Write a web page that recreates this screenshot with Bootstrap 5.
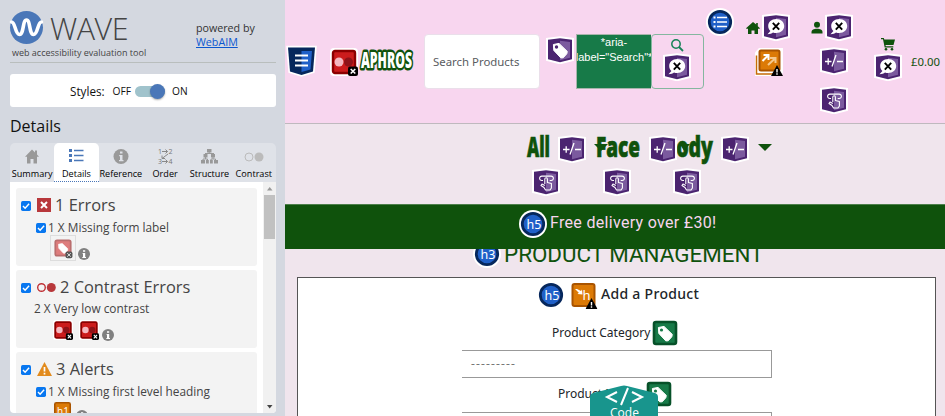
<!DOCTYPE html>
<html lang="en">
<head>
<meta charset="utf-8">
<meta name="viewport" content="width=device-width, initial-scale=1">
<title>WAVE – Aphros product management</title>
<link href="https://cdn.jsdelivr.net/npm/bootstrap@5.3.0/dist/css/bootstrap.min.css" rel="stylesheet">
<style>
html,body{height:416px;overflow:hidden}
body{font-family:"Noto Sans",sans-serif;font-size:12px;line-height:16px;color:#212529}
svg{display:block;flex:none;overflow:visible}
.ic{width:28px;height:28px}
/* sidebar */
.wave{width:285px;height:416px;padding:0 9px 3px 10px;background:#d4d8e0;font-family:"Open Sans",sans-serif;color:#333;overflow:hidden}
.brand-row{height:63px;border-bottom:1px solid #b9bebd}
.brand-top{height:46px;padding-top:10px}
.brand-name{font-weight:300;font-size:30.500px;line-height:36px;margin:0 0 0 7px;color:#444;letter-spacing:-.5px}
.tagline{font-size:9px;line-height:14px;margin-left:2px;white-space:nowrap;color:#444}
.powered{font-size:10.700px;line-height:14px;width:80px;padding-top:21px}
.powered a{color:#0b57d0}
.styles-box{height:33px;margin-top:11px;background:#fff;border-radius:3px;padding:1px 0 0 60px;color:#111}
.styles-lab{font-size:11.700px}
.styles-opt{font-size:10.200px}
.switch-track{width:30px;height:11px;border-radius:6px;background:#a0c3cc;margin:0 7px 0 4px}
.switch-knob{width:15px;height:15px;border-radius:50%;background:#4a77b8;box-shadow:0 1px 2px #0005;margin:-2px 0 0 auto}
.panel-title{font-size:16px;line-height:22px;margin:8px 0 6px 0;color:#111}
.tabs-bar{height:39px;background:#dfe2e8;border-radius:5px 5px 0 0}
.tab-item{width:16.666%;height:39px;font-size:9.100px;line-height:12px;padding-top:5px;color:#000;white-space:nowrap;border-bottom:1px dotted transparent}
.tab-item svg{height:18px;width:24px;margin-bottom:2px}
.tab-on{background:#fff;border-bottom-color:#4a77b8;border-radius:5px 5px 0 0}
.results{height:231px;background:#fff;border-radius:0 0 4px 4px;overflow:hidden}
.result-list{width:253px;padding:6px 6px 0 6px}
.group-box{background:#f3f3f3;border-radius:3px;height:78px;margin-bottom:4px;padding:7px 0 0 5px}
.group-head{height:20px;font-size:16.400px;line-height:20px;color:#444}
.group-sub{height:20px;font-size:11.850px;color:#444;padding-top:3px}
.chk{width:10px;height:10px;margin-top:2px}
.sub-chk{margin-right:2px}
.thumb{width:26px;height:26px;border:1px solid #ddd}
.scroller{width:13px;background:#f1f1f1;height:231px}
.thumb-bar{width:11px;height:44px;background:#c1c1c1}
/* page */
.site{width:660px;height:416px;background:#f0e5ed;overflow:hidden}
.top-head{height:124px;background:#f8d6ef;border-bottom:1px solid #bfb9be}
.search-in{width:116px;height:55px;margin:34px 0 0 10px;border:1px solid #eadfea;border-radius:4px;background:#fff;color:#595c5f;padding:0 8px;font-size:11.400px}
.aria-note{width:75px;height:55px;margin:34px 0 0 2px;background:#177a48;color:#fff;font:11px/15px "Liberation Sans",sans-serif;overflow:hidden;white-space:nowrap;border:1px solid #a8b5ac;border-right:0}
.search-btn{width:53px;height:55px;margin-top:34px;border:1px solid #84b79f;border-radius:4px}
.price-txt{color:#0f520c;font-size:11.400px;margin:54px 0 0 9px}
.cat-row{height:80px;padding-left:241px}
.cat-word{font-family:"Open Sans",sans-serif;font-weight:800;font-size:29px;fill:#0f520c;stroke:#0f520c;stroke-width:.7px}
.promo{height:45px;background:#0f520c;border-top:1px solid #4d7f4b;color:#f8d6ef;font:16px/20px Roboto,sans-serif}
.promo-txt{margin-top:-8px;letter-spacing:.31px}
.head-clip{height:28px;overflow:hidden;color:#0f520c;font:22.400px/28px Roboto,sans-serif}
.form-card{margin:0 9px 0 12px;height:150px;background:#fff;border:1px solid #555}
.add-row{height:32px;padding:2px 0 0 239px;font-size:14px}
.add-txt{font-weight:500;letter-spacing:.3px;margin:-2px 0 0 3px}
.select-box{width:310px;height:28px;margin:3px 0 0 164px;border:1px solid #999;border-left:0;color:#777;padding-left:9px;letter-spacing:1.150px}
.code-tab{position:absolute;left:590px;top:385px;width:70px;height:31px;overflow:hidden}
</style>
<script src="https://cdn.jsdelivr.net/npm/bootstrap@5.3.0/dist/js/bootstrap.bundle.min.js"></script>
</head>
<body class="d-flex m-0">
<svg width="0" height="0" class="position-absolute">
<defs>
<symbol id="hex" viewBox="0 0 28 28"><path d="M2 3.700 14 2.200 26 3.700V23.300L14 26.300 2 23.300Z" fill="#4b2470" stroke="#fff" stroke-width="4"/><path d="M2 3.700 14 2.200 26 3.700V23.300L14 26.300 2 23.300Z" fill="#4b2470"/><path d="M14 4.700 24 6V21.700L14 24.200Z" fill="#7b5a9e"/></symbol>
<symbol id="aria" viewBox="0 0 28 28"><use href="#hex"/><path d="M14.200 6C9.500 6 6.200 9 6.200 13c0 2.200.8 3.800 2.200 5L5.500 21.300C8 21.300 9.800 20.700 11 19.600c1 .4 2 .5 3.200.5 4.700 0 8-3 8-7s-3.300-7.100-8-7.100Z" fill="#fff"/><path d="m10.800 9.800 6.400 6.800m0-6.800-6.400 6.800" stroke="#000" stroke-width="1.900"/></symbol>
<symbol id="expand" viewBox="0 0 28 28"><use href="#hex"/><path d="M5 14.500h6.500M8.200 11.300v6.400M12 19.500l4-11.500M17 14.500h6" fill="none" stroke="#fff" stroke-width="1.300"/></symbol>
<symbol id="tapper" viewBox="0 0 28 28"><use href="#hex"/><path d="M11 12.500H9.800a2.200 2.200 0 1 1 0-4.400h9.400a2.200 2.200 0 1 1 0 4.400h-1.500M12.800 16V11a1.300 1.300 0 0 1 2.600 0v3.500l4 1v4.500l-1.400 2h-4.500L12 19.500l-3-2 1-1.500 2.800 1.500" fill="none" stroke="#fff" stroke-width="1.100" stroke-linejoin="round"/></symbol>
<symbol id="tagp" viewBox="0 0 28 28"><path d="M7.400 8.500 13 7.400l8.300 8-.5 2.400-3.600 4-2.400.1-7-7.500Z" fill="#fff" stroke="#fff" stroke-linejoin="round"/></symbol>
<symbol id="tagx" viewBox="0 0 28 28"><use href="#hex"/><use href="#tagp"/><circle cx="10.500" cy="11" r="1.700" fill="#4b2470"/></symbol>
<symbol id="green" viewBox="0 0 28 28"><rect x="1" y="1" width="26" height="26" rx="3" fill="#fff"/><rect x="3" y="3" width="22" height="22" rx="2" fill="#177a48" stroke="#075129" stroke-width="2.600"/><use href="#tagp"/><circle cx="10.500" cy="11" r="1.600" fill="#177a48"/></symbol>
<symbol id="red" viewBox="0 0 28 28"><rect width="28" height="28" rx="4" fill="#fff"/><rect x="3" y="3" width="22" height="22" rx="2" fill="#cc1c1c" stroke="#8b0000" stroke-width="2.400"/><circle cx="9" cy="14" r="4.500" fill="#f4b9c0"/><circle cx="18.500" cy="14" r="4.500" fill="#8f1318"/><rect x="18" y="18.500" width="10" height="9.500" rx="2" fill="#000"/><path d="m20.700 20.900 4.600 4.700m0-4.700-4.600 4.700" stroke="#fff" stroke-width="1.500"/></symbol>
<symbol id="disc" viewBox="0 0 28 28"><circle cx="14" cy="14" r="14" fill="#fff"/><circle cx="14" cy="14" r="10.700" fill="#2060c8" stroke="#06275c" stroke-width="2.800"/></symbol>
<symbol id="warn" viewBox="0 0 12 11"><path d="M6 0 12 11H0Z" fill="#000"/><path d="M6 4v3.500M6 8.300v1.400" stroke="#fff" stroke-width="1.400"/></symbol>
<symbol id="info" viewBox="0 0 12 12"><circle cx="6" cy="6" r="6" fill="#808080"/><path d="M5 2.200h2.200v1.600H5ZM4.500 4.900h2.700V9h.8v.9H4.300V9H5V5.800h-.5Z" fill="#fff"/></symbol>
<symbol id="chk" viewBox="0 0 9 9"><rect width="9" height="9" rx="1.500" fill="#0877f0"/><path d="m1.800 4.600 1.900 1.900 3.600-4" fill="none" stroke="#fff" stroke-width="1.300"/></symbol>
</defs>
</svg>

<aside class="wave flex-shrink-0">
  <div class="brand-row d-flex justify-content-between">
    <div>
      <div class="brand-top d-flex">
        <svg width="33" height="34" viewBox="0 0 33 34"><circle cx="16.500" cy="17.500" r="16.500" fill="#4a77b8"/><path d="M1.500 12C5.500 12 5 24.500 9.500 24.500S12.500 10 16.500 10 19 24.500 23.500 24.500 27.500 12 31.500 12" fill="none" stroke="#fff" stroke-width="3.600" stroke-linecap="round"/></svg>
        <div class="brand-name">WAVE</div>
      </div>
      <div class="tagline">web accessibility evaluation tool</div>
    </div>
    <div class="powered">powered by<br><a href="#">WebAIM</a></div>
  </div>
  <div class="styles-box d-flex align-items-center"><span class="styles-lab">Styles:</span><span class="styles-opt ms-2">OFF</span><div class="switch-track"><div class="switch-knob"></div></div><span class="styles-opt">ON</span></div>
  <div class="panel-title">Details</div>
  <div class="tabs-bar d-flex">
    <div class="tab-item d-flex flex-column align-items-center"><svg viewBox="0 0 24 18"><path d="M12 1.500 5 8.800h2v6.700h3.500V11h3v4.500H17V8.800h2L17 6.600V2.500h-2v2Z" fill="#999"/></svg>Summary</div>
    <div class="tab-item tab-on d-flex flex-column align-items-center"><svg viewBox="0 0 24 18"><path d="M5 2.500h3M5 7.500h3M5 12.500h3" stroke="#4a77b8" stroke-width="3"/><path d="M10 2.500h9.500M10 7.500h9.500M10 12.500h9.500" stroke="#4a77b8" stroke-width="1.500"/></svg>Details</div>
    <div class="tab-item d-flex flex-column align-items-center"><svg viewBox="0 0 24 18"><circle cx="12" cy="8.500" r="7.500" fill="#999"/><path d="M11 3.500h2.500v2H11ZM10.200 7h3.300v5h1v1.300h-4.500V12H11V8.200h-.8Z" fill="#dfe2e8"/></svg>Reference</div>
    <div class="tab-item d-flex flex-column align-items-center"><svg viewBox="0 0 24 18" font-size="7" font-family="Open Sans" fill="#777"><text x="5" y="6">1</text><text x="15.500" y="6">2</text><text x="5" y="16">3</text><text x="15.500" y="16">4</text><path d="M9 3.500h5.500m-2-2 2 2-2 2M9 13.500h5.500m-2-2 2 2-2 2M15 6 9 10.500m0-3v3h3" stroke="#888" fill="none"/></svg>Order</div>
    <div class="tab-item d-flex flex-column align-items-center"><svg viewBox="0 0 24 18"><path d="M10 1h4.500v3.500H10ZM6.500 6h4v3.500h-4ZM14 6h4v3.500h-4ZM4 12h4v3.500H4ZM9 12h2.800v3.500H9ZM13 12h2.800v3.500H13ZM17 12h4v3.500h-4Z" fill="#999"/><path d="M12.200 3v3M8 5.500h9M8.500 9v2H6v2m2.500-2h2v2M16 9v2h-2v2m2-2h2.500v2" stroke="#999" fill="none"/></svg>Structure</div>
    <div class="tab-item d-flex flex-column align-items-center"><svg viewBox="0 0 24 18"><circle cx="7" cy="9" r="4" fill="none" stroke="#bbb"/><circle cx="17" cy="9" r="4.500" fill="#bbb"/></svg>Contrast</div>
  </div>
  <div class="results d-flex">
    <div class="result-list">
      <div class="group-box">
        <div class="group-head d-flex align-items-center"><svg class="chk"><use href="#chk"/></svg><svg style="margin-left:6px" width="14" height="14" viewBox="0 0 14 14"><rect width="14" height="14" fill="#b8383b"/><path d="m4 4 6 6m0-6-6 6" stroke="#fff" stroke-width="2"/></svg><span class="ms-1">1 Errors</span></div>
        <div class="group-sub d-flex align-items-center" style="padding-left:15px"><svg class="chk sub-chk"><use href="#chk"/></svg>1 X Missing form label</div>
        <div class="d-flex align-items-end" style="margin-left:29px"><div class="thumb"><svg width="24" height="24" viewBox="0 0 28 28"><g opacity=".55"><rect x="5" y="5" width="18" height="18" rx="2" fill="#cc1c1c" stroke="#8b0000" stroke-width="2"/></g><g transform="translate(3 3) scale(.78)"><use href="#tagp"/></g><rect x="17" y="18" width="8" height="8" rx="2" fill="#555"/><path d="m19 20 4 4m0-4-4 4" stroke="#fff"/></svg></div><svg style="margin:0 0 1px 2px" width="12" height="12"><use href="#info"/></svg></div>
      </div>
      <div class="group-box">
        <div class="group-head d-flex align-items-center"><svg class="chk"><use href="#chk"/></svg><svg style="margin-left:6px" width="19" height="14" viewBox="0 0 19 14"><circle cx="4.500" cy="7.500" r="3.800" fill="none" stroke="#c03438" stroke-width="1.400"/><circle cx="14.300" cy="7.500" r="4.500" fill="#b8383b"/></svg><span class="ms-1">2 Contrast Errors</span></div>
        <div class="group-sub" style="padding-left:13px">2 X Very low contrast</div>
        <div class="d-flex align-items-end ms-4 ps-2"><svg width="20" height="20" style="margin:3px 0 5px"><use href="#red"/></svg><svg style="margin:0 0 5px 6px" width="20" height="20"><use href="#red"/></svg><svg style="margin:0 0 4px 3px" width="12" height="12"><use href="#info"/></svg></div>
      </div>
      <div class="group-box">
        <div class="group-head d-flex align-items-center"><svg class="chk"><use href="#chk"/></svg><svg style="margin-left:6px" width="15" height="14" viewBox="0 0 15 14"><path d="M7.500 0 15 14H0Z" fill="#e28b1d"/><path d="M7.500 5v4.500m0 1.200v1.800" stroke="#fff" stroke-width="1.700"/></svg><span class="ms-1">3 Alerts</span></div>
        <div class="group-sub d-flex align-items-center" style="padding-left:15px"><svg class="chk sub-chk"><use href="#chk"/></svg>1 X Missing first level heading</div>
        <div class="d-flex align-items-start" style="margin:3px 0 0 33px"><svg width="17" height="20" viewBox="0 0 17 20"><rect x=".8" y=".8" width="15.400" height="16" rx="1.500" fill="#dc7a06" stroke="#a95400" stroke-width="1.600"/><text x="3" y="12.500" font-size="10" fill="#fff">h1</text></svg><svg style="margin:8px 0 0 5px" width="12" height="12"><use href="#info"/></svg></div>
      </div>
    </div>
    <div class="scroller d-flex flex-column align-items-center"><svg width="11" height="13"><path d="M3 8.500h5.500L5.700 5Z" fill="#999"/></svg><div class="thumb-bar"></div><svg class="mt-auto" width="11" height="13"><path d="M3 5h5.500L5.700 8.500Z" fill="#444"/></svg></div>
  </div>
</aside>

<main class="site flex-shrink-0">
  <header class="top-head d-flex align-items-start">
    <svg width="32" height="34" viewBox="0 0 32 34" style="margin-top:43px"><path d="M3 4.500H30L28 28.500 16.500 32 5 28.500Z" fill="#06275c" stroke="#fff" stroke-width="3.400"/><path d="M3 4.500H30L28 28.500 16.500 32 5 28.500Z" fill="#06275c"/><path d="M16.500 8H27L25.500 26.500 16.500 29Z" fill="#2060c8"/><path d="M10 12.500h13M10 17.500h13M10 22.500h13" stroke="#fff" stroke-width="2"/></svg>
    <svg class="ic" style="margin:48px 0 0 13px"><use href="#red"/></svg>
    <svg width="57" height="26" style="margin:47px 0 0 -1px"><text x="4" y="21" textLength="51" lengthAdjust="spacingAndGlyphs" font-family="Open Sans" font-weight="800" font-size="22" fill="#fff" stroke="#0f520c" stroke-width="5" stroke-linejoin="round" paint-order="stroke">APHROS</text></svg>
    <div class="search-in d-flex align-items-center">Search Products</div>
    <svg class="ic" style="margin:36px 0 0 6px"><use href="#tagx"/></svg>
    <div class="aria-note text-center d-flex flex-column align-items-center"><span>*aria-</span><span>label="Search"*</span></div>
    <div class="search-btn d-flex flex-column align-items-center"><svg width="13" height="13" style="margin-top:4px"><circle cx="5" cy="5" r="4.200" fill="none" stroke="#168257" stroke-width="1.500"/><path d="m8 8 4 4" stroke="#168257" stroke-width="1.800"/></svg><svg class="ic" style="margin:1px 2px 0 0"><use href="#aria"/></svg></div>
    <svg class="ic" style="margin:8px 0 0 2px"><use href="#disc"/><path d="M7.500 9.500h2m-2 4.500h2m-2 4.500h2" stroke="#fff" stroke-width="2"/><path d="M11 9.500h10M11 14h10M11 18.500h10" stroke="#fff" stroke-width="1.500"/></svg>
    <div style="margin:13px 0 0 12px">
      <div class="d-flex"><svg width="14" height="14" style="margin-top:8px"><path d="M7 1 0 7.200l1 .8 1-.6V13h3.500V9.500h3V13H12V7.400l1 .6 1-.8-2.200-2V2h-1.600v1.500Z" fill="#0f520c"/></svg><svg class="ic" style="margin-left:2px"><use href="#aria"/></svg></div>
      <svg width="30" height="30" viewBox="0 0 30 30" style="margin:7px 0 0 9px"><path d="M0 4.500 4 0H28V25L24 28H0Z" fill="#fff"/><path d="M1.500 7.500V26H18" fill="none" stroke="#c66b08" stroke-width="1.500"/><rect x="4.500" y="2.500" width="20" height="20" rx="1.500" fill="#dc7a06" stroke="#a95400" stroke-width="2"/><path d="m13 17 7-6.500m-5-.5h5.500V15" fill="none" stroke="#f5c88c" stroke-width="2"/><path d="m7.500 13 6-6m-5 0h5v5" fill="none" stroke="#fff" stroke-width="2"/><svg x="16" y="17" width="12" height="11"><use href="#warn"/></svg></svg>
    </div>
    <div style="margin:13px 0 0 21px">
      <div class="d-flex"><svg width="12" height="14" style="margin-top:8px"><circle cx="6" cy="3.700" r="3" fill="#0f520c"/><path d="M.5 12.500V11C.5 9 3 7.800 6 7.800s5.500 1.200 5.500 3.200v1.500Z" fill="#0f520c"/></svg><svg class="ic" style="margin-left:2px"><use href="#aria"/></svg></div>
      <svg class="ic" style="margin:6px 0 0 9px"><use href="#expand"/></svg>
      <svg class="ic" style="margin:11px 0 0 9px"><use href="#tapper"/></svg>
    </div>
    <div style="margin:38px 0 0 21px">
      <svg width="14" height="13" style="margin-left:7px"><path d="M0 0h2.800l.5 1.500H14L12.500 7H4.500l.3 1.200h7.500v1.200H3.700L2 1.200H0Z" fill="#0f520c"/><circle cx="5" cy="11.300" r="1.300" fill="#0f520c"/><circle cx="11" cy="11.300" r="1.300" fill="#0f520c"/></svg>
      <svg class="ic" style="margin-top:2px"><use href="#aria"/></svg>
    </div>
    <div class="price-txt">£0.00</div>
  </header>
  <nav class="cat-row d-flex align-items-start">
    <svg width="24" height="34" style="margin-top:8px"><text class="cat-word" x="1" y="25" textLength="23" lengthAdjust="spacingAndGlyphs">All</text></svg>
    <div style="margin-top:11px;width:46px"><svg class="ic" style="margin-left:8px"><use href="#expand"/></svg><svg class="ic" style="margin:5px 0 0 -18px"><use href="#tapper"/></svg></div>
    <div class="d-flex" style="margin-top:8px;width:67px;height:34px"><svg width="46" height="34"><path d="M-2 12H12L5 19Z" fill="#0f520c"/><text class="cat-word" x="0" y="25" textLength="44" lengthAdjust="spacingAndGlyphs">Face</text></svg></div>
    <div style="margin:44px 0 0 -60px"><svg class="ic"><use href="#tapper"/></svg></div>
    <svg width="48" height="34" style="margin:8px 0 0 47px"><text class="cat-word" x="-15" y="25" textLength="50" lengthAdjust="spacingAndGlyphs">Body</text><path d="M2 12H12L6 19Z" fill="#0f520c"/><svg x="-29" y="3" width="28" height="28"><use href="#expand"/></svg></svg>
    <div style="margin:44px 0 0 -53px"><svg class="ic"><use href="#tapper"/></svg></div>
    <svg class="ic" style="margin:11px 0 0 20px"><use href="#expand"/></svg>
    <svg width="14" height="7" style="margin:20px 0 0 9px"><path d="M0 0H14L7 7Z" fill="#0f520c"/></svg>
  </nav>
  <div class="promo d-flex align-items-center"><svg class="ic" style="margin:-6px 3px 0 234px"><use href="#disc"/><text x="7.500" y="18.500" font-family="Noto Sans" font-size="12.500" fill="#fff">h5</text></svg><span class="promo-txt">Free delivery over £30!</span></div>
  <div class="head-clip d-flex"><svg class="ic" style="margin:-9px 3px 0 188px"><use href="#disc"/><text x="7.500" y="18.500" font-family="Noto Sans" font-size="12.500" fill="#fff">h3</text></svg><span style="margin-top:-9px">PRODUCT MANAGEMENT</span></div>
  <section class="form-card">
    <div class="add-row d-flex align-items-center"><svg class="ic"><use href="#disc"/><text x="7.500" y="18.500" font-size="12.500" fill="#fff">h5</text></svg><svg width="28" height="28" viewBox="0 0 28 28" style="margin-left:5px"><rect x="2.500" y="3" width="22" height="22" rx="2" fill="#dc7a06" stroke="#a95400" stroke-width="2"/><text x="12.500" y="18.500" font-size="13" fill="#fff">h</text><path d="M5 8h2l4 2 1-1.500.5 5-5-.5 1.300-1.200Z" fill="#fff"/><svg x="15.500" y="17" width="12" height="11"><use href="#warn"/></svg></svg><span class="add-txt">Add a Product</span></div>
    <div class="d-flex align-items-center" style="padding:9px 0 0 254px"><span>Product Category</span><svg class="ic" style="margin-left:1px"><use href="#green"/></svg></div>
    <div class="select-box d-flex align-items-center">---------</div>
    <div class="d-flex align-items-center" style="padding:2px 0 0 260px"><span>Product Name</span><svg class="ic" style="margin-left:6px"><use href="#green"/></svg></div>
    <div class="select-box" style="margin-top:4px"></div>
  </section>
</main>
<div class="code-tab"><svg width="70" height="34"><path d="M0 12Q0 9 3 8L31 1Q34 0 37 1L65 8Q68 9 68 12V34H0Z" fill="#18958d"/><path d="m27 7-10 5 10 5M42 7l10 5-10 5M38 3 31 20" fill="none" stroke="#fff" stroke-width="2"/><text x="20" y="31.500" font-family="Open Sans" font-size="12" textLength="29" fill="#fff">Code</text></svg></div>
</body>
</html>
